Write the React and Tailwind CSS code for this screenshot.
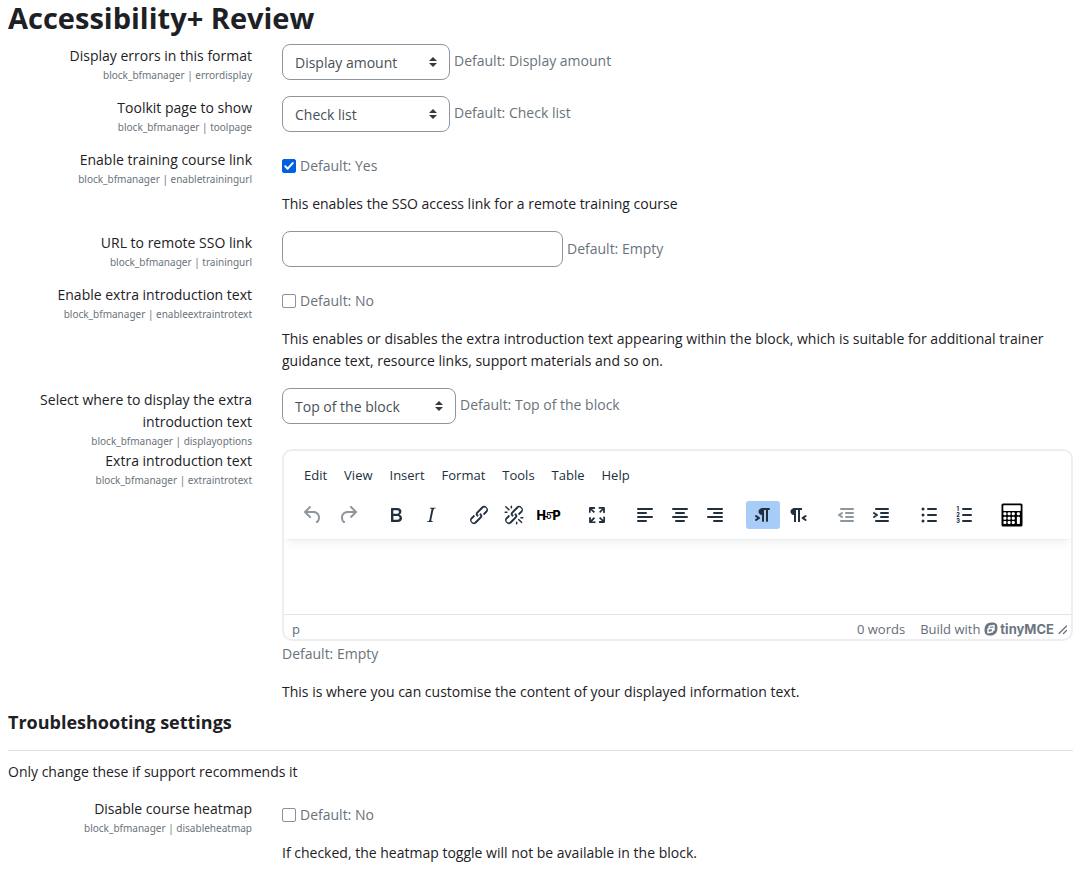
import React from "react";

const ICONS = {
  undo: "M6.4 8H12c3.7 0 6.2 2 6.8 5.1.6 2.7-.4 5.6-2.3 6.8a1 1 0 0 1-1-1.8c1.1-.6 1.8-2.7 1.4-4.6-.5-2.1-2.1-3.5-4.9-3.5H6.4l3.3 3.3a1 1 0 1 1-1.4 1.4l-5-5a1 1 0 0 1 0-1.4l5-5a1 1 0 0 1 1.4 1.4L6.4 8Z",
  redo: "M17.6 10H12c-2.8 0-4.4 1.4-4.9 3.5-.4 2 .3 4 1.4 4.6a1 1 0 1 1-1 1.8c-2-1.2-2.9-4.1-2.3-6.8.6-3 3-5.1 6.8-5.1h5.6l-3.3-3.3a1 1 0 1 1 1.4-1.4l5 5a1 1 0 0 1 0 1.4l-5 5a1 1 0 0 1-1.4-1.4l3.3-3.3Z",
  bold: "M7.8 19c-.3 0-.5 0-.6-.2l-.2-.5V5.7c0-.2 0-.4.2-.5l.6-.2h5c1.5 0 2.7.3 3.5 1 .7.6 1.1 1.4 1.1 2.5a3 3 0 0 1-.6 1.9c-.4.6-1 1-1.6 1.2.4.1.9.3 1.3.6s.8.7 1 1.2c.4.4.5 1 .5 1.6 0 1.3-.4 2.3-1.3 3-.8.7-2.1 1-3.8 1H7.8Zm5-8.3c.6 0 1.2-.1 1.6-.5.4-.3.6-.7.6-1.3 0-1.1-.8-1.7-2.3-1.7H9.3v3.5h3.4Zm.5 6c.7 0 1.3-.1 1.7-.4.4-.4.6-.9.6-1.5s-.2-1-.7-1.4c-.4-.3-1-.4-2-.4H9.4v3.8h4Z",
  italic: "m16.7 4.7-.1.9h-.3c-.6 0-1 0-1.4.3-.3.3-.4.6-.5 1.1l-2.1 9.8v.6c0 .5.4.8 1.4.8h.2l-.2.8H8l.2-.8h.2c1.1 0 1.8-.5 2-1.5l2-9.8.1-.5c0-.6-.4-.8-1.4-.8h-.3l.2-.9h5.8Z",
  link: "M6.2 12.3a1 1 0 0 1 1.4 1.4l-2 2a2 2 0 1 0 2.6 2.8l4.8-4.8a1 1 0 0 0 0-1.4 1 1 0 1 1 1.4-1.3 2.9 2.9 0 0 1 0 4L9.6 20a3.9 3.9 0 0 1-5.5-5.5l2-2Zm11.6-.6a1 1 0 0 1-1.4-1.4l2-2a2 2 0 1 0-2.6-2.8L11 10.3a1 1 0 0 0 0 1.4A1 1 0 1 1 9.6 13a2.9 2.9 0 0 1 0-4L14.4 4a3.9 3.9 0 0 1 5.5 5.5l-2 2Z",
  unlink: "M6.2 12.3a1 1 0 0 1 1.4 1.4l-2 2a2 2 0 1 0 2.6 2.8l4.8-4.8a1 1 0 0 0 0-1.4 1 1 0 1 1 1.4-1.3 2.9 2.9 0 0 1 0 4L9.6 20a3.9 3.9 0 0 1-5.5-5.5l2-2Zm11.6-.6a1 1 0 0 1-1.4-1.4l2.1-2a2 2 0 1 0-2.7-2.8L11 10.3a1 1 0 0 0 0 1.4A1 1 0 1 1 9.6 13a2.9 2.9 0 0 1 0-4L14.4 4a3.9 3.9 0 0 1 5.5 5.5l-2 2ZM7.6 6.3a.8.8 0 0 1-1 1.1L3.3 4.2a.7.7 0 1 1 1-1l3.2 3.1ZM5.1 8.6a.8.8 0 0 1 0 1.5H3a.8.8 0 0 1 0-1.5H5Zm5-3.5a.8.8 0 0 1-1.5 0V3a.8.8 0 0 1 1.5 0V5Zm6 11.8a.8.8 0 0 1 1-1l3.2 3.2a.8.8 0 0 1-1 1L16 17Zm-2.2 2a.8.8 0 0 1 1.5 0V21a.8.8 0 0 1-1.5 0V19Zm5-3.5a.7.7 0 1 1 0-1.5H21a.8.8 0 0 1 0 1.5H19Z",
  fullscreen: "m15.3 10-1.2-1.3 2.9-3h-2.3a.9.9 0 1 1 0-1.7H19c.5 0 .9.4.9.9v4.4a.9.9 0 1 1-1.8 0V7l-2.9 3Zm0 4 3 3v-2.3a.9.9 0 1 1 1.7 0V19c0 .5-.4.9-.9.9h-4.4a.9.9 0 1 1 0-1.8H17l-3-2.9 1.3-1.2ZM10 15.4l-2.9 3h2.3a.9.9 0 1 1 0 1.7H5a.9.9 0 0 1-.9-.9v-4.4a.9.9 0 1 1 1.8 0V17l2.9-3 1.2 1.3ZM8.7 10 5.7 7v2.3a.9.9 0 0 1-1.7 0V5c0-.5.4-.9.9-.9h4.4a.9.9 0 0 1 0 1.8H7l3 2.9-1.3 1.2Z",
  ltr: "M11 5h7a1 1 0 0 1 0 2h-1v11a1 1 0 0 1-2 0V7h-2v11a1 1 0 0 1-2 0v-6c-.5 0-1 0-1.4-.3A3.4 3.4 0 0 1 7.8 10a3.3 3.3 0 0 1 0-2.8 3.4 3.4 0 0 1 1.8-1.8L11 5ZM4.4 16.2 6.2 15l-1.8-1.2a1 1 0 0 1 1.2-1.6l3 2a1 1 0 0 1 0 1.6l-3 2a1 1 0 1 1-1.2-1.6Z",
  rtl: "M8 5h8v2h-2v12h-2V7h-2v12H8v-7c-.5 0-1 0-1.4-.3A3.4 3.4 0 0 1 4.8 10a3.3 3.3 0 0 1 0-2.8 3.4 3.4 0 0 1 1.8-1.8L8 5Zm12.2 11.2a1 1 0 1 1-1.2 1.6l-3-2a1 1 0 0 1 0-1.6l3-2a1 1 0 1 1 1.2 1.6L18.4 15l1.8 1.2Z",
};

const LINES = {
  alignLeft: "M5 6h14M5 10h8M5 14h14M5 18h8",
  alignCenter: "M5 6h14M8 10h8M5 14h14M8 18h8",
  alignRight: "M5 6h14M11 10h8M5 14h14M11 18h8",
  outdent: "M7 6h12M12 10h7M12 14h7M7 18h12M8 10l-3 2 3 2",
  indent: "M7 6h12M12 10h7M12 14h7M7 18h12M5 10l3 2-3 2",
  bullets: "M11 6h8M11 12h8M11 18h8",
  numbers: "M11 6h8M11 12h8M11 18h8",
};

function Icon({ name }) {
  if (name === "h5p") {
    return (
      <svg width="24" height="24" viewBox="0 0 24 24" fill="#000" fontFamily="Inter, sans-serif" fontWeight="800">
        <text x="-0.6" y="16.7" fontSize="12.5">H</text>
        <text x="9" y="16" fontSize="9" fontWeight="500">5</text>
        <text x="15.4" y="16.7" fontSize="12.5">P</text>
        <path d="M7 13.6h4M12 9.6h6" stroke="#000" strokeWidth="1.2" />
      </svg>
    );
  }
  if (name === "calc") {
    return (
      <svg width="24" height="24" viewBox="0 0 24 24">
        <rect x="1.5" y="0.5" width="21" height="23" rx="1.5" fill="#000" />
        <rect x="3.3" y="2.3" width="17.4" height="5.6" rx="0.5" fill="#fff" />
        {[10.8, 15.2, 19.6].map((y) =>
          [4.9, 9.1, 13.3, 18.4].map((x) =>
            x > 16 && y > 13 ? null : (
              <rect key={x + "-" + y} x={x - 1.5} y={y - 1.5} width="3" height="3" rx="1" fill="#fff" />
            )
          )
        )}
        <rect x="16.9" y="13.7" width="3" height="7.4" rx="0.8" fill="#fff" />
      </svg>
    );
  }
  if (LINES[name]) {
    return (
      <svg width="24" height="24" viewBox="0 0 24 24" fill="none" stroke="currentColor" strokeWidth="2" strokeLinecap="round" strokeLinejoin="round">
        <path d={LINES[name]} />
        {name === "bullets" && (
          <g fill="currentColor" stroke="none">
            <circle cx="6" cy="6" r="1.5" />
            <circle cx="6" cy="12" r="1.5" />
            <circle cx="6" cy="18" r="1.5" />
          </g>
        )}
        {name === "numbers" && (
          <g fill="currentColor" stroke="none" fontFamily="Inter, sans-serif" fontWeight="800" fontSize="5.5">
            <text x="4.6" y="8">1</text>
            <text x="4.2" y="14">2</text>
            <text x="4.2" y="20">3</text>
          </g>
        )}
      </svg>
    );
  }
  return (
    <svg width="24" height="24" viewBox="0 0 24 24" fill="currentColor">
      <path fillRule="evenodd" d={ICONS[name]} />
    </svg>
  );
}

const TOOLBAR = [
  [["undo", "Undo"], ["redo", "Redo"]],
  [["bold", "Bold"], ["italic", "Italic"]],
  [["link", "Link"], ["unlink", "Unlink"], ["h5p", "Insert H5P content"]],
  [["fullscreen", "Fullscreen"]],
  [["alignLeft", "Align left"], ["alignCenter", "Align center"], ["alignRight", "Align right"]],
  [["ltr", "Left to right"], ["rtl", "Right to left"]],
  [["outdent", "Decrease indent"], ["indent", "Increase indent"]],
  [["bullets", "Bullet list"], ["numbers", "Numbered list"]],
  [["calc", "Equation editor"]],
];

const DISABLED = ["undo", "redo", "outdent"];

function Row({ id, label, name, className = "mb-4", children }) {
  return (
    <div className={"grid grid-cols-[244px_minmax(0,1fr)] gap-x-[30px] " + className}>
      <div className="pt-px text-right">
        <label htmlFor={id} className="block">{label}</label>
        <span className="block font-['Noto_Sans',sans-serif] text-[10px] leading-4 text-[#6a737b]">
          {"block_bfmanager | " + name}
        </span>
      </div>
      <div>{children}</div>
    </div>
  );
}

function Default({ children }) {
  return <span className="text-[#6a737b]">Default: {children}</span>;
}

function SelectField({ id, value, options, width }) {
  return (
    <div className="flex items-start gap-1">
      <div className={"relative " + width}>
        <select
          id={id}
          defaultValue={value}
          className="block h-9 w-full appearance-none rounded-lg border border-[#8f959e] bg-white pl-3 pr-7 pt-0.5 text-[#495057]"
        >
          {options.map((o) => <option key={o}>{o}</option>)}
        </select>
        <svg className="pointer-events-none absolute right-[13px] top-[13px]" width="8" height="10" viewBox="0 0 4 5" fill="#343a40">
          <path d="M2 0L0 2h4zm0 5L0 3h4z" />
        </svg>
      </div>
      <div className="pt-1.5"><Default>{value}</Default></div>
    </div>
  );
}

function CheckField({ id, checked, value, children }) {
  return (
    <div className="pt-[7px]">
      <div className="flex items-center gap-1">
        <span className="relative block size-3.5">
          <input
            id={id}
            type="checkbox"
            defaultChecked={checked}
            className="peer block size-3.5 appearance-none rounded-[2px] border border-[#8f8f9d] bg-white checked:border-[#0060df] checked:bg-[#0060df]"
          />
          <svg className="pointer-events-none absolute inset-0 hidden peer-checked:block" width="14" height="14" viewBox="0 0 14 14" fill="none" stroke="#fff" strokeWidth="2" strokeLinecap="round" strokeLinejoin="round">
            <path d="M3.3 7.3l2.4 2.4 5-5.6" />
          </svg>
        </span>
        <Default>{value}</Default>
      </div>
      <p className="mt-4">{children}</p>
    </div>
  );
}

function Editor({ id }) {
  return (
    <div className="overflow-hidden rounded-[10px] border-2 border-[#eee] bg-white text-[13px] text-[#222f3e]">
      <div className="relative pb-2.5 shadow-[0_2px_2px_-2px_rgba(34,47,62,0.1),0_8px_8px_-4px_rgba(34,47,62,0.07)]">
        <div className="flex gap-[17px] px-5 pb-4 pt-3.5 leading-5">
          {["Edit", "View", "Insert", "Format", "Tools", "Table", "Help"].map((m) => (
            <button key={m} type="button">{m}</button>
          ))}
        </div>
        <div className="flex gap-3.5 px-3">
          {TOOLBAR.map((group) => (
            <div key={group[0][0]} className="flex gap-px">
              {group.map(([name, title]) => (
                <button
                  key={name}
                  type="button"
                  aria-label={title}
                  disabled={DISABLED.includes(name)}
                  className={"flex h-7 w-[34px] items-center justify-center rounded-[3px] disabled:opacity-50 " + (name === "ltr" ? "bg-[#a6ccf7]" : "")}
                >
                  <Icon name={name} />
                </button>
              ))}
            </div>
          ))}
        </div>
      </div>
      <textarea id={id} className="block h-[75px] w-full resize-none bg-transparent p-3 outline-none" />
      <div className="flex h-[25px] items-center border-t border-[#e3e3e3] pl-2 pr-[3px] text-[#646d78]">
        <span className="grow pt-1">p</span>
        <span className="pt-1">0 words</span>
        <a href="#tinymce" className="ml-[15px] flex items-center gap-1 pt-1">
          Build with
          <span className="flex items-center gap-[2px] font-['Inter',sans-serif] text-[13px] font-bold leading-4 text-[#6b7580]">
            <svg width="14" height="14" viewBox="0 0 14 14">
              <path fill="currentColor" d="M7.5.4C11.5.2 13.6 2 13.5 5.8 13.4 10.8 11 13.5 6.3 13.6 2.4 13.7.4 11.8.5 8 .6 3.2 2.8.6 7.5.4Z" />
              <path fill="none" stroke="#fff" strokeWidth="1.4" strokeLinejoin="round" strokeLinecap="round" d="M5.2 6V4.3L10 3.4V8L8.6 8.3M8.6 6.2 3.9 7v3.7l4.6-.9Z" />
            </svg>
            tinyMCE
          </span>
        </a>
        <svg className="ml-1 mt-1.5" width="10" height="10" viewBox="0 0 10 10" fill="none" stroke="#646d78" strokeWidth="1.2" strokeLinecap="round">
          <path d="M1 8.5 8.5 1M5.5 8.5l3-3" />
        </svg>
      </div>
    </div>
  );
}

export default function App() {
  return (
    <main className="min-h-screen bg-white pl-2 pr-[11px] font-['Open_Sans','Noto_Sans',sans-serif] text-[14px] leading-[22px] text-[#1d2125]">
      <h2 className="pb-2 text-[29px] font-bold leading-9">Accessibility+ Review</h2>
      <Row id="errordisplay" label="Display errors in this format" name="errordisplay" className="mb-[13px]">
        <SelectField id="errordisplay" value="Display amount" options={["Display amount", "Display icon"]} width="w-[168px]" />
      </Row>
      <Row id="toolpage" label="Toolkit page to show" name="toolpage" className="mb-[13px]">
        <SelectField id="toolpage" value="Check list" options={["Check list", "Summary"]} width="w-[168px]" />
      </Row>
      <Row id="enabletrainingurl" label="Enable training course link" name="enabletrainingurl">
        <CheckField id="enabletrainingurl" checked value="Yes">
          This enables the SSO access link for a remote training course
        </CheckField>
      </Row>
      <Row id="trainingurl" label="URL to remote SSO link" name="trainingurl" className="mb-[13px]">
        <div className="flex items-center gap-1">
          <input id="trainingurl" type="text" className="h-9 w-[281px] rounded-lg border border-[#8f959e] px-3" />
          <Default>Empty</Default>
        </div>
      </Row>
      <Row id="enableextraintrotext" label="Enable extra introduction text" name="enableextraintrotext">
        <CheckField id="enableextraintrotext" value="No">
          This enables or disables the extra introduction text appearing within the block, which is suitable for additional trainer guidance text, resource links, support materials and so on.
        </CheckField>
      </Row>
      <Row id="displayoptions" label="Select where to display the extra introduction text" name="displayoptions" className="">
        <SelectField id="displayoptions" value="Top of the block" options={["Top of the block", "Bottom of the block"]} width="w-[174px]" />
      </Row>
      <Row id="extraintrotext" label="Extra introduction text" name="extraintrotext" className="mb-[7px]">
        <Editor id="extraintrotext" />
        <p className="mt-[2px]"><Default>Empty</Default></p>
        <p className="mt-4">This is where you can customise the content of your displayed information text.</p>
      </Row>
      <h3 className="text-[18px] font-bold leading-6">Troubleshooting settings</h3>
      <hr className="mb-2.5 mt-4 border-[#dee2e6]" />
      <p className="mb-3.5">Only change these if support recommends it</p>
      <Row id="disableheatmap" label="Disable course heatmap" name="disableheatmap" className="">
        <CheckField id="disableheatmap" value="No">
          If checked, the heatmap toggle will not be available in the block.
        </CheckField>
      </Row>
    </main>
  );
}
